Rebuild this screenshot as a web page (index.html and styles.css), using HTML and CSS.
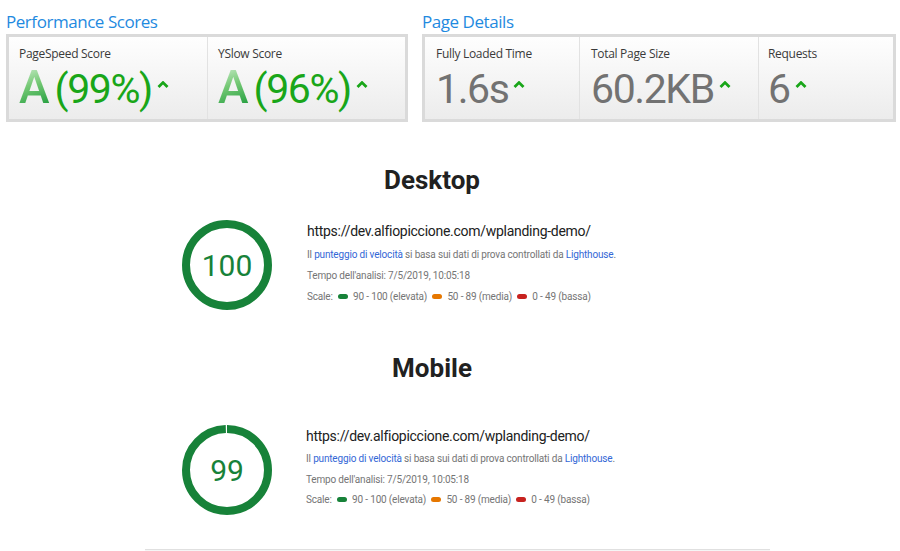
FILE: index.html
```html
<!DOCTYPE html>
<html lang="it">
<head>
<meta charset="utf-8">
<title>Performance</title>
<link rel="stylesheet" href="styles.css">
</head>
<body>
<div class="top">
  <section class="group group-scores">
    <h2 class="group-title">Performance Scores</h2>
    <div class="box">
      <div class="cell cell-half">
        <div class="label">PageSpeed Score</div>
        <div class="value value-green"><span class="grade">A</span><span class="num">(99%)</span><svg class="caret" viewBox="0 0 12 7" width="12" height="7"><polyline points="1.5,6 6,1.6 10.5,6"/></svg></div>
      </div>
      <div class="cell cell-half">
        <div class="label">YSlow Score</div>
        <div class="value value-green"><span class="grade">A</span><span class="num">(96%)</span><svg class="caret" viewBox="0 0 12 7" width="12" height="7"><polyline points="1.5,6 6,1.6 10.5,6"/></svg></div>
      </div>
    </div>
  </section>
  <section class="group group-details">
    <h2 class="group-title">Page Details</h2>
    <div class="box">
      <div class="cell cell-time">
        <div class="label">Fully Loaded Time</div>
        <div class="value value-gray"><span class="num">1.6s</span><svg class="caret" viewBox="0 0 12 7" width="12" height="7"><polyline points="1.5,6 6,1.6 10.5,6"/></svg></div>
      </div>
      <div class="cell cell-size">
        <div class="label">Total Page Size</div>
        <div class="value value-gray"><span class="num">60.2KB</span><svg class="caret" viewBox="0 0 12 7" width="12" height="7"><polyline points="1.5,6 6,1.6 10.5,6"/></svg></div>
      </div>
      <div class="cell cell-req">
        <div class="label">Requests</div>
        <div class="value value-gray"><span class="num">6</span><svg class="caret" viewBox="0 0 12 7" width="12" height="7"><polyline points="1.5,6 6,1.6 10.5,6"/></svg></div>
      </div>
    </div>
  </section>
</div>

<div class="lh">
  <h1 class="lh-title lh-title-desktop">Desktop</h1>
  <div class="result result-desktop">
    <div class="gauge">
      <svg viewBox="0 0 90 90" width="90" height="90"><circle class="gauge-arc" cx="45" cy="45" r="41"/></svg>
      <span class="gauge-num">100</span>
    </div>
    <div class="info">
      <div class="url">https://dev.alfiopiccione.com/wplanding-demo/</div>
      <div class="line line-first">Il <a class="link">punteggio di velocità</a> si basa sui dati di prova controllati da <a class="link">Lighthouse</a>.</div>
      <div class="line">Tempo dell'analisi: 7/5/2019, 10:05:18</div>
      <div class="line">Scale: <span class="pill pill-pass"></span>90 - 100 (elevata) <span class="pill pill-avg"></span>50 - 89 (media) <span class="pill pill-fail"></span>0 - 49 (bassa)</div>
    </div>
  </div>

  <h1 class="lh-title lh-title-mobile">Mobile</h1>
  <div class="result result-mobile">
    <div class="gauge">
      <svg viewBox="0 0 90 90" width="90" height="90"><circle class="gauge-arc gauge-arc-99" cx="45" cy="45" r="41"/></svg>
      <span class="gauge-num">99</span>
    </div>
    <div class="info">
      <div class="url">https://dev.alfiopiccione.com/wplanding-demo/</div>
      <div class="line line-first">Il <a class="link">punteggio di velocità</a> si basa sui dati di prova controllati da <a class="link">Lighthouse</a>.</div>
      <div class="line">Tempo dell'analisi: 7/5/2019, 10:05:18</div>
      <div class="line">Scale: <span class="pill pill-pass"></span>90 - 100 (elevata) <span class="pill pill-avg"></span>50 - 89 (media) <span class="pill pill-fail"></span>0 - 49 (bassa)</div>
    </div>
  </div>
  <div class="rule"></div>
</div>
</body>
</html>
```
FILE: styles.css
```css
* { box-sizing: border-box; }
html, body { margin: 0; padding: 0; background: #ffffff; }
body { width: 900px; height: 551px; overflow: hidden; font-family: "Open Sans", "DejaVu Sans", sans-serif; }

.top {
  display: flex;
  gap: 14px;
  padding: 12px 4px 0 6px;
}
.group-scores { width: 402px; }
.group-details { flex: 1; }

.group-title {
  margin: 0 0 2px 0;
  font-size: 17px;
  line-height: 20px;
  font-weight: 400;
  color: #1f8ae0;
  letter-spacing: -0.45px;
}

.box {
  display: flex;
  height: 88px;
  border: 3px solid #dadada;
  background: linear-gradient(#fefefe, #ececec);
}
.cell {
  display: flex;
  flex-direction: column;
  padding: 9px 0 0 10px;
}
.cell + .cell { border-left: 1px solid #e2e2e2; }
.cell-half { width: 198px; }
.cell-time { width: 154px; padding-left: 11px; }
.cell-size { width: 179px; padding-left: 11px; }
.cell-req { flex: 1; padding-left: 9px; }

.label {
  font-size: 12px;
  line-height: 16px;
  color: #3a3a3a;
  letter-spacing: -0.3px;
  margin-bottom: 5px;
}

.value {
  display: flex;
  align-items: baseline;
  font-family: Roboto, "Open Sans", sans-serif;
  font-size: 41px;
  line-height: 44px;
  letter-spacing: -1.4px;
}
.value-green { color: #19a619; }
.value-gray { color: #727272; }

.grade {
  font-size: 46px;
  line-height: 40px;
  font-weight: 500;
  letter-spacing: 0;
  margin-right: 5px;
  background: linear-gradient(160deg, #cdeecd 0%, #74c874 45%, #1c9a3a 100%);
  -webkit-background-clip: text;
  background-clip: text;
  color: transparent;
}

.caret {
  align-self: flex-start;
  margin-top: 14px;
  margin-left: 5px;
  fill: none;
  stroke: #19a619;
  stroke-width: 2.8;
}

/* Lighthouse section */
.lh {
  margin-left: 140px;
  width: 630px;
  font-family: Roboto, "Noto Sans", sans-serif;
}
.lh-title {
  margin: 0;
  padding-right: 46px;
  text-align: center;
  font-size: 26px;
  line-height: 30px;
  font-weight: 700;
  color: #212121;
}
.lh-title-desktop { margin-top: 43px; }
.lh-title-mobile { margin-top: 43px; }

.result {
  display: flex;
  align-items: flex-start;
  padding-left: 42px;
}
.result-desktop { margin-top: 25px; gap: 35px; }
.result-mobile { margin-top: 42px; gap: 34px; }

.gauge {
  position: relative;
  width: 90px;
  height: 90px;
  flex: none;
}
.gauge svg { display: block; }
.gauge-arc {
  fill: none;
  stroke: #178239;
  stroke-width: 8;
}
.gauge-arc-99 {
  stroke-dasharray: 256 1.6;
  transform: rotate(-90deg);
  transform-origin: 45px 45px;
}
.gauge-num {
  position: absolute;
  inset: 0;
  display: flex;
  align-items: center;
  justify-content: center;
  font-size: 30px;
  color: #178239;
  padding-top: 1px;
}

.info { padding-top: 2px; }
.url {
  font-size: 14px;
  line-height: 18px;
  color: #212121;
  letter-spacing: -0.28px;
}
.line {
  font-size: 10px;
  line-height: 21px;
  color: #757575;
  letter-spacing: -0.17px;
  white-space: nowrap;
}
.line-first { margin-top: 4px; }
.result-mobile .line { line-height: 20.5px; }
.link { color: #3367d6; text-decoration: none; }

.pill {
  display: inline-block;
  width: 10px;
  height: 5px;
  border-radius: 3px;
  margin: 0 5px 0 3px;
  vertical-align: 1px;
}
.pill-pass { background: #178239; }
.pill-avg { background: #e67700; }
.pill-fail { background: #c7221f; }

.rule {
  margin: 34px 0 0 5px;
  width: 625px;
  height: 1px;
  background: #e0e0e0;
  box-shadow: 0 1px 1px rgba(0,0,0,0.05);
}
```
